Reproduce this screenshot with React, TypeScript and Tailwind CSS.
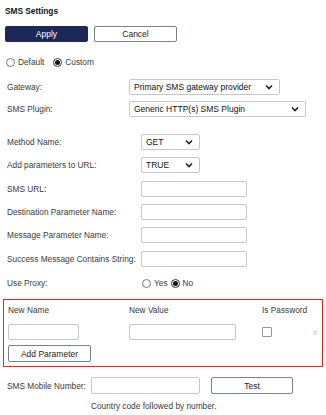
import type { ReactNode } from "react";

function Chevron() {
  return (
    <svg className="w-[8px] h-[6px]" viewBox="0 0 8 6" fill="none" stroke="#222" strokeWidth={1.6}>
      <path d="M1 1.5l3 3 3-3" />
    </svg>
  );
}

function Select({ value, w }: { value: string; w: string }) {
  return (
    <div
      className={`${w} h-[16px] flex items-center justify-between border border-[#c8c8c8] rounded-[2px] pl-[4px] pr-[6px] text-[8.5px] text-[#111] bg-white`}
    >
      <span>{value}</span>
      <Chevron />
    </div>
  );
}

function Input({ w }: { w: string }) {
  return <div className={`${w} h-[16px] border border-[#c8c8c8] rounded-[2px] bg-white`} />;
}

function Radio({ checked, label }: { checked?: boolean; label: string }) {
  return (
    <span className="flex items-center gap-[3px]">
      <span
        className={`w-[9px] h-[9px] rounded-full border flex items-center justify-center ${
          checked ? "border-[#333]" : "border-[#777]"
        }`}
      >
        {checked && <span className="w-[5px] h-[5px] rounded-full bg-[#111]" />}
      </span>
      <span>{label}</span>
    </span>
  );
}

function Row({ label, mt, lw, children }: { label: string; mt: string; lw: string; children: ReactNode }) {
  return (
    <div className={`flex items-center ${mt} pl-[4px]`}>
      <div className={`${lw} shrink-0`}>{label}</div>
      {children}
    </div>
  );
}

export default function App() {
  return (
    <div
      className="w-[326px] h-[415px] bg-white px-[3px] text-[8.3px] text-[#3a3a3a] overflow-hidden"
      style={{ fontFamily: '"Liberation Sans", Arial, sans-serif' }}
    >
      <div className="pt-[6px] pl-[2px] leading-[10px] font-bold text-[#111]">SMS Settings</div>

      <div className="flex gap-[6px] mt-[10px] pl-[2px]">
        <button className="w-[83px] h-[16px] bg-[#1d2856] text-white rounded-[2px] text-[8.5px]">Apply</button>
        <button className="w-[83px] h-[16px] bg-white border border-[#7a8090] rounded-[2px] text-[8.5px] text-[#222]">
          Cancel
        </button>
      </div>

      <div className="flex items-center gap-[9px] mt-[15px] h-[10px] pl-[3px]">
        <Radio label="Default" />
        <Radio checked label="Custom" />
      </div>

      <Row label="Gateway:" mt="mt-[12px]" lw="w-[122px]">
        <Select value="Primary SMS gateway provider" w="w-[151px]" />
      </Row>
      <Row label="SMS Plugin:" mt="mt-[6px]" lw="w-[122px]">
        <Select value="Generic HTTP(s) SMS Plugin" w="w-[177px]" />
      </Row>

      <Row label="Method Name:" mt="mt-[17px]" lw="w-[134px]">
        <Select value="GET" w="w-[59px]" />
      </Row>
      <Row label="Add parameters to URL:" mt="mt-[7px]" lw="w-[134px]">
        <Select value="TRUE" w="w-[59px]" />
      </Row>
      <Row label="SMS URL:" mt="mt-[8px]" lw="w-[134px]">
        <Input w="w-[106px]" />
      </Row>
      <Row label="Destination Parameter Name:" mt="mt-[7px]" lw="w-[134px]">
        <Input w="w-[106px]" />
      </Row>
      <Row label="Message Parameter Name:" mt="mt-[7px]" lw="w-[134px]">
        <Input w="w-[106px]" />
      </Row>
      <Row label="Success Message Contains String:" mt="mt-[8px]" lw="w-[134px]">
        <Input w="w-[106px]" />
      </Row>
      <Row label="Use Proxy:" mt="mt-[10px]" lw="w-[135px]">
        <div className="flex items-center gap-[3px] h-[10px]">
          <Radio label="Yes" />
          <Radio checked label="No" />
        </div>
      </Row>

      <div className="mt-[10px] border border-[#ff1a1a] w-[320px] pl-[4px] pt-[5px] pb-[4px]">
        <div className="flex items-center h-[10px]">
          <div className="w-[121px]">New Name</div>
          <div className="w-[133px]">New Value</div>
          <div>Is Password</div>
        </div>
        <div className="flex items-center mt-[9px] h-[16px]">
          <div className="w-[121px]">
            <Input w="w-[71px]" />
          </div>
          <div className="w-[133px]">
            <Input w="w-[107px]" />
          </div>
          <div className="w-[51px]">
            <div className="w-[10px] h-[10px] border border-[#999] rounded-[1px]" />
          </div>
          <span className="text-[#c4c4c4] text-[7.5px]">#</span>
        </div>
        <button className="mt-[5px] w-[83px] h-[17px] border border-[#7a8090] rounded-[2px] bg-white text-[8.5px] text-[#222]">
          Add Parameter
        </button>
      </div>

      <div className="flex items-center mt-[10px] pl-[4px]">
        <div className="w-[84px] shrink-0">SMS Mobile Number:</div>
        <Input w="w-[109px] !h-[17px]" />
        <button className="ml-[11px] w-[82px] h-[17px] border border-[#7a8090] rounded-[2px] bg-white text-[8.5px] text-[#222]">
          Test
        </button>
      </div>
      <div className="mt-[7px] h-[10px] leading-[10px] pl-[88px]">Country code followed by number.</div>
    </div>
  );
}
